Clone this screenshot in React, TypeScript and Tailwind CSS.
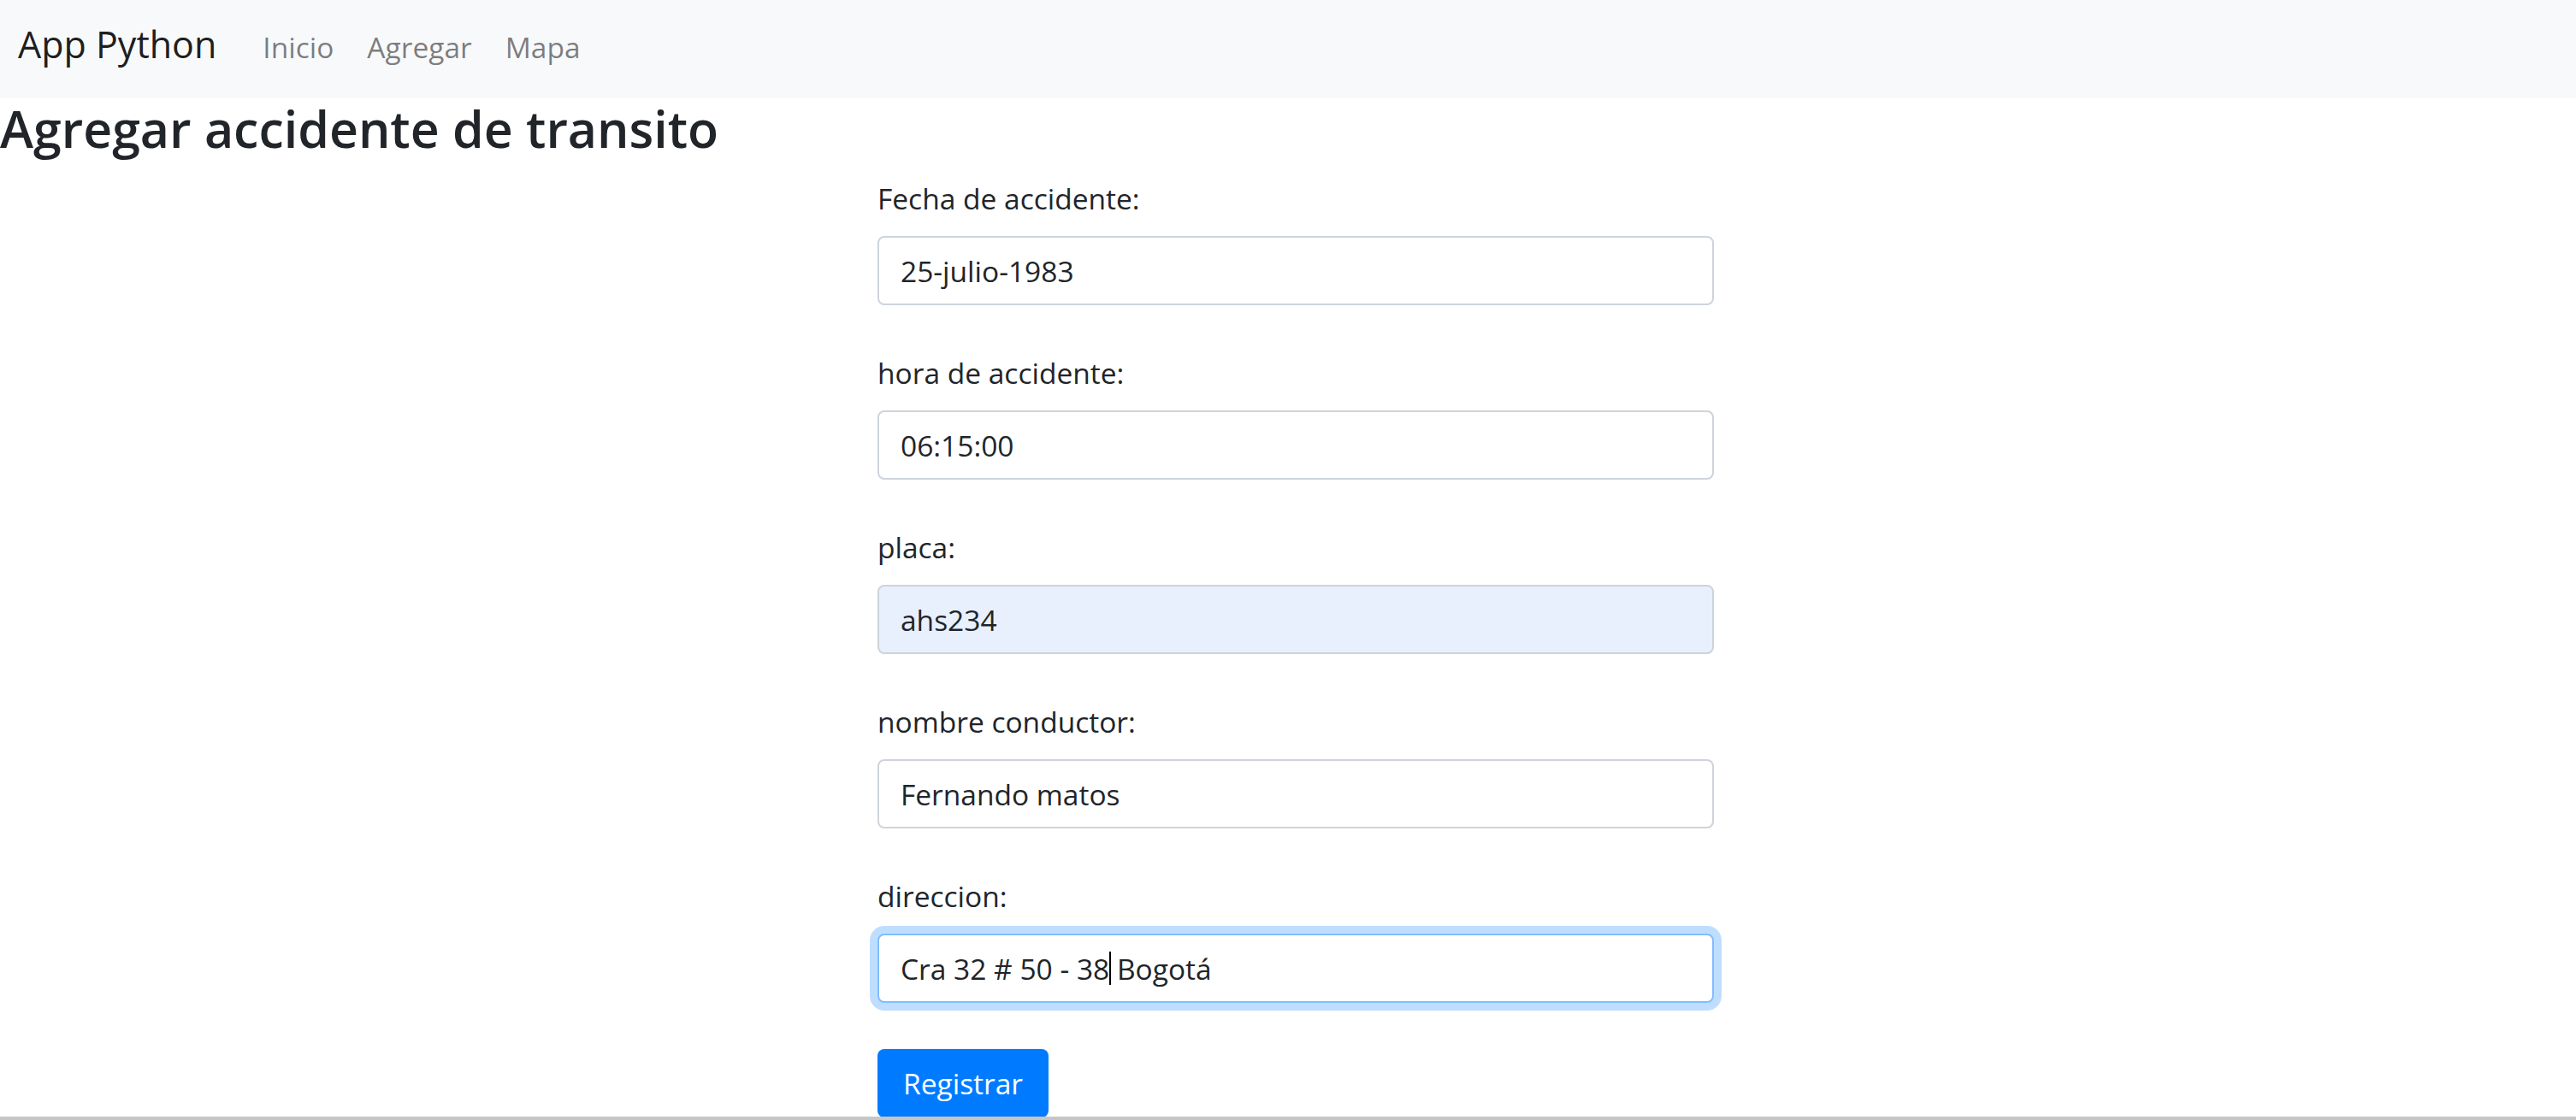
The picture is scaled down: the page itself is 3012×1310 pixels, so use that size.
import type { ReactNode } from "react";

const links = ["Inicio", "Agregar", "Mapa"];

const fields = [
  { label: "Fecha de accidente:", value: "25-julio-1983" },
  { label: "hora de accidente:", value: "06:15:00" },
  { label: "placa:", value: "ahs234", autofill: true },
  { label: "nombre conductor:", value: "Fernando matos" },
];

function Field({ label, children }: { label: string; children: ReactNode }) {
  return (
    <div className="flex flex-col">
      <label className="mb-[19px] h-[50px] text-[33.5px] leading-[50px] text-[#212529]">
        {label}
      </label>
      {children}
    </div>
  );
}

export default function App() {
  return (
    <div className="flex h-[1310px] w-full flex-col overflow-hidden bg-white font-['Open_Sans',sans-serif]">
      <div className="h-[1306px] overflow-hidden">
        {/* navbar */}
        <nav className="flex h-[115px] items-baseline bg-[#f8f9fa] pl-[21px] pt-[20px]">
          <a className="text-[43px] leading-[63px] text-black/90">App Python</a>
          <div className="ml-[54px] flex items-baseline gap-[39px]">
            {links.map((l) => (
              <a key={l} className="text-[33.5px] leading-[50px] text-black/50">
                {l}
              </a>
            ))}
          </div>
        </nav>

        <h1 className="h-[70px] text-[59px] font-semibold leading-[70px] text-[#212529]">
          Agregar accidente de transito
        </h1>

        <form className="ml-[1026px] mt-[22px] flex w-[978px] flex-col gap-[54px]">
          {fields.map((f) => (
            <Field key={f.label} label={f.label}>
              <input
                readOnly
                value={f.value}
                className={`block h-[81px] w-full rounded-[8px] border-2 border-[#ced4da] px-[25px] text-[33.5px] leading-[50px] text-[#212529] outline-none ${
                  f.autofill ? "bg-[#e8f0fe]" : "bg-white"
                }`}
              />
            </Field>
          ))}

          <Field label="direccion:">
            {/* focused input with caret */}
            <div
              role="textbox"
              className="flex h-[81px] w-full items-center whitespace-pre rounded-[8px] border-2 border-[#80bdff] bg-white px-[25px] text-[33.5px] leading-[50px] text-[#212529] shadow-[0_0_0_9px_rgba(0,123,255,0.25)]"
            >
              <span>Cra 32 # 50 - 38</span>
              <span className="relative h-[39px] w-0">
                <span className="absolute left-0 top-0 h-[39px] w-[2px] bg-black" />
              </span>
              <span> Bogotá</span>
            </div>
          </Field>

          <div>
            <button
              type="button"
              className="h-[80px] rounded-[8px] bg-[#007bff] px-[30px] text-[33.5px] leading-[50px] text-white"
            >
              Registrar
            </button>
          </div>
        </form>
      </div>
      <div className="h-[4px] bg-[#c6c6c6]" />
    </div>
  );
}
